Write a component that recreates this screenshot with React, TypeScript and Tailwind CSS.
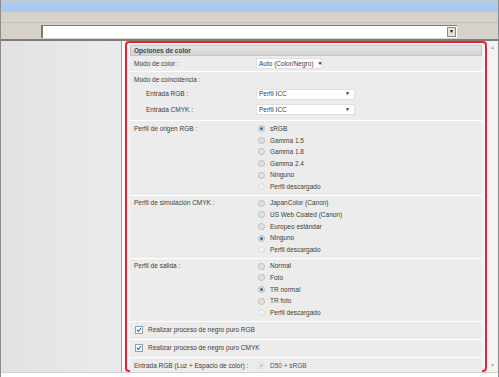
import React from 'react';

function Radio({ checked, disabled, dot = 'bg-[#2f6fa8]' }: { checked?: boolean; disabled?: boolean; dot?: string }) {
  return (
    <span
      className={`inline-flex items-center justify-center w-[7px] h-[7px] rounded-full border ${
        disabled ? 'border-[#dcdcdc] bg-[#f0f0f0]' : 'border-[#bcbcbc] bg-[#e2e2e2]'
      }`}
    >
      {checked && <span className={`w-[3px] h-[3px] rounded-full ${dot}`} />}
    </span>
  );
}

function Check() {
  return (
    <span className="inline-flex items-center justify-center w-[8px] h-[8px] border border-[#8f9fb5] bg-white">
      <svg width="6" height="6" viewBox="0 0 6 6">
        <path d="M1 3 L2.5 4.5 L5 1" stroke="#2b5f9e" strokeWidth="1.1" fill="none" />
      </svg>
    </span>
  );
}

function Select({ value, width }: { value: string; width: string }) {
  return (
    <div className={`flex items-center justify-between whitespace-nowrap h-[11px] bg-white border border-[#e0e0e0] pl-[2px] pr-[4px] gap-[4px] ${width}`}>
      <span>{value}</span>
      <span className="text-[5px] text-[#222]">▼</span>
    </div>
  );
}

function RadioRow({ label, options }: { label: string; options: { text: string; checked?: boolean; disabled?: boolean }[] }) {
  return (
    <div className="flex border-b border-white py-[2px]">
      <div className="w-[126px] pl-[4px] h-[11.6px] flex items-center">{label}</div>
      <div className="flex flex-col">
        {options.map((o) => (
          <div key={o.text} className="h-[11.6px] flex items-center gap-[5px] pl-[2px]">
            <Radio checked={o.checked} disabled={o.disabled} />
            <span>{o.text}</span>
          </div>
        ))}
      </div>
    </div>
  );
}

export default function App() {
  return (
    <div
      className="w-[499px] h-[377px] overflow-hidden bg-[#f6f6f6] border-x border-[#8c8c8c] flex flex-col text-[6.5px] text-[#3c3c3c]"
      style={{ fontFamily: '"Liberation Sans", Arial, sans-serif' }}
    >
      <div className="h-[2px] bg-[#c8c8c8]" />
      <div className="h-[10px] bg-[#a9c9ef]" />
      <div className="h-[11px] bg-[#d6d2ca] border-b border-[#c4c0b8]" />
      <div className="h-[16px] bg-[#d6d2ca] flex items-center">
        <div className="w-[40px]" />
        <div className="w-[416px] h-[13px] bg-white border-l-2 border-t border-[#7a7a7a] flex justify-end items-center pr-[1px]">
          <div className="w-[9px] h-[10px] bg-[#e4e2dc] border border-[#8a8a8a] flex items-center justify-center text-[5px] text-black">▼</div>
        </div>
      </div>
      <div className="h-[2px] bg-[#7c7c7c]" />
      <div className="flex h-[331px]">
        <div className="w-[121px] bg-gradient-to-r from-[#e2e2e2] to-[#ebebeb] border-r border-[#a6a6a6]" />
        <div className="w-[3px] bg-[#fafafa]" />
        <div className="w-[362px] border-2 border-[#ea2330] rounded-[4px] bg-[#f4f4f4] px-[3px] pt-[2px]">
          <div className="h-[11px] flex items-center pl-[3px] font-bold text-[#454545] bg-gradient-to-b from-[#e4e4e4] to-[#d2d2d2] border border-[#c6c6c6]">
            Opciones de color
          </div>
          <div className="bg-[#ececec]">
            <div className="flex items-center h-[16px] border-b border-white">
              <div className="w-[126px] pl-[4px]">Modo de color :</div>
              <Select value="Auto (Color/Negro)" width="w-[66px]" />
            </div>
            <div className="flex flex-col border-b border-white pt-[2px] pb-[3px]">
              <div className="h-[12px] flex items-center pl-[4px]">Modo de coincidencia :</div>
              <div className="flex items-center h-[16px]">
                <div className="w-[126px] pl-[16px]">Entrada RGB :</div>
                <Select value="Perfil ICC" width="w-[99px]" />
              </div>
              <div className="flex items-center h-[15px]">
                <div className="w-[126px] pl-[16px]">Entrada CMYK :</div>
                <Select value="Perfil ICC" width="w-[99px]" />
              </div>
            </div>
            <RadioRow
              label="Perfil de origen RGB :"
              options={[
                { text: 'sRGB', checked: true },
                { text: 'Gamma 1.5' },
                { text: 'Gamma 1.8' },
                { text: 'Gamma 2.4' },
                { text: 'Ninguno' },
                { text: 'Perfil descargado', disabled: true },
              ]}
            />
            <RadioRow
              label="Perfil de simulación CMYK :"
              options={[
                { text: 'JapanColor (Canon)' },
                { text: 'US Web Coated (Canon)' },
                { text: 'Europeo estándar' },
                { text: 'Ninguno', checked: true },
                { text: 'Perfil descargado', disabled: true },
              ]}
            />
            <RadioRow
              label="Perfil de salida :"
              options={[
                { text: 'Normal' },
                { text: 'Foto' },
                { text: 'TR normal', checked: true },
                { text: 'TR foto' },
                { text: 'Perfil descargado', disabled: true },
              ]}
            />
            <div className="flex items-center gap-[5px] h-[18px] pl-[5px] border-b border-white">
              <Check />
              <span>Realizar proceso de negro puro RGB</span>
            </div>
            <div className="flex items-center gap-[5px] h-[18px] pl-[5px] border-b border-white">
              <Check />
              <span>Realizar proceso de negro puro CMYK</span>
            </div>
            <div className="flex items-center h-[16px]">
              <div className="w-[126px] pl-[4px]">Entrada RGB (Luz + Espacio de color) :</div>
              <div className="flex items-center gap-[5px] pl-[2px] text-[#555]">
                <Radio checked disabled dot="bg-[#c4c4c4]" />
                <span>D50 + sRGB</span>
              </div>
            </div>
          </div>
        </div>
        <div className="flex-1 flex flex-col justify-between items-center py-[3px] bg-[#f4f4f4]">
          <span className="text-[5px] text-[#b0b0b0]">▲</span>
          <span className="text-[5px] text-[#b0b0b0]">▼</span>
        </div>
      </div>
      <div className="flex-1 bg-white border-t border-[#d0d0d0]" />
    </div>
  );
}
